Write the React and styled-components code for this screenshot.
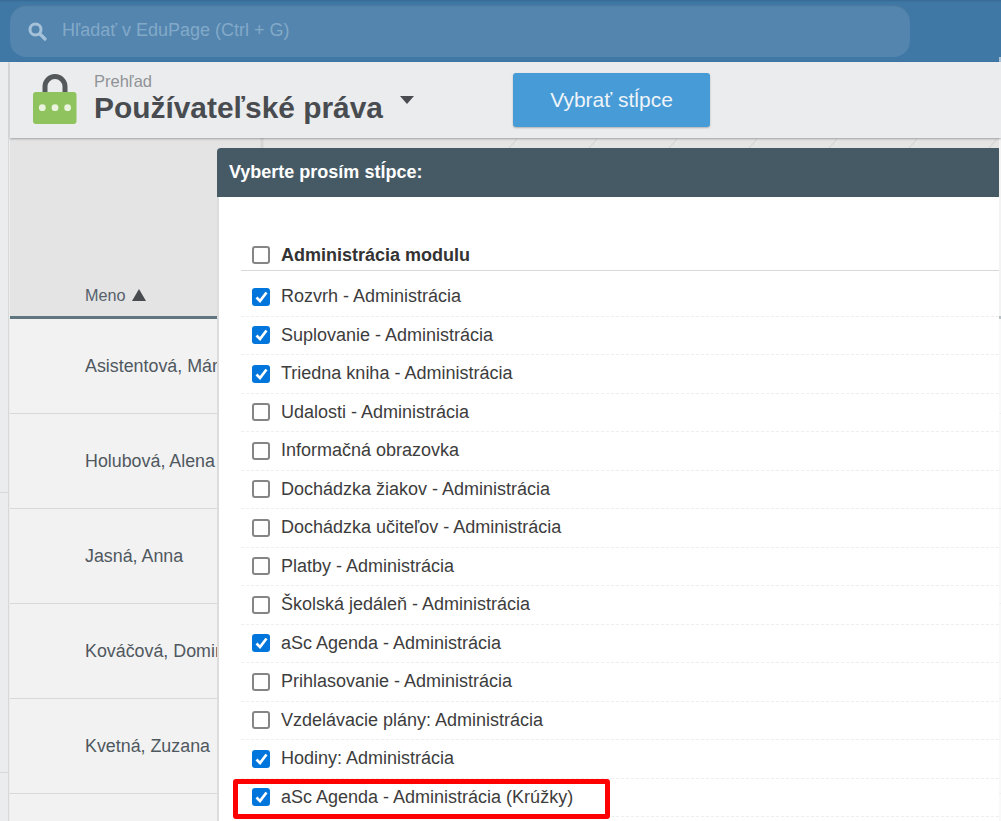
import styled, { createGlobalStyle } from "styled-components"

const GlobalStyle = createGlobalStyle`
  html, body {
    margin: 0;
    padding: 0;
    height: 821px;
    overflow: hidden;
    background: #ebecee;
    font-family: "Liberation Sans", Arial, sans-serif;
  }
`

const Page = styled.div`
  position: relative;
  width: 1001px;
  height: 821px;
  overflow: hidden;
`

const TopBar = styled.div`
  height: 62px;
  box-sizing: border-box;
  padding: 5px 91px 5px 10px;
  background: #3f77a5;
  box-shadow: inset 0 3px 2px -2px rgba(0, 0, 0, 0.12);
`

const SearchBox = styled.div`
  height: 52px;
  box-sizing: border-box;
  display: flex;
  align-items: center;
  gap: 15px;
  padding-left: 18px;
  border-radius: 16px;
  background: #5385af;
  color: #83a9c8;
  font-size: 18px;
  box-shadow: inset 0 1px 1px rgba(0, 0, 0, 0.1);
`

const SearchLabel = styled.span`
  margin-bottom: 2px;
`

const Main = styled.div`
  display: flex;
  height: 759px;
`

const LeftStrip = styled.div`
  flex: 0 0 8px;
  border-right: 1px solid #d8d8d8;
  background: #ebecee;
`

const StripSection = styled.div`
  height: ${(p) => p.$height}px;
  box-sizing: border-box;
  border-bottom: 1px solid #d8d8d8;
`

const Content = styled.div`
  flex: 1;
  margin-left: 1px;
  min-width: 0;
  display: flex;
  flex-direction: column;
`

const Header = styled.div`
  position: relative;
  z-index: 1;
  height: 76px;
  flex: none;
  box-sizing: border-box;
  display: flex;
  align-items: center;
  padding-left: 23px;
  background: #ebecee;
  box-shadow: 0 1px 2px rgba(0, 0, 0, 0.3);
`

const TitleBlock = styled.div`
  margin-left: 16px;
  width: 419px;
`

const Overline = styled.div`
  font-size: 16.5px;
  line-height: 18px;
  margin-top: -3px;
  color: #909396;
`

const TitleRow = styled.div`
  display: flex;
  align-items: flex-start;
  gap: 17px;
`

const Title = styled.div`
  font-size: 29.9px;
  line-height: 36px;
  font-weight: bold;
  color: #484c50;
`

const Caret = styled.span`
  width: 0;
  height: 0;
  margin-top: 6px;
  border-left: 7.5px solid transparent;
  border-right: 7.5px solid transparent;
  border-top: 8px solid #484c50;
`

const PrimaryButton = styled.div`
  width: 197px;
  height: 54px;
  display: flex;
  align-items: center;
  justify-content: center;
  border-radius: 3px;
  background: #479bd6;
  color: #eef4f9;
  font-size: 21px;
  box-shadow: 0 1px 2px rgba(0, 0, 0, 0.25);
`

const Table = styled.div`
  flex: 1;
  background: #f2f2f2;
`

const TableHead = styled.div`
  position: relative;
  height: 181px;
  box-sizing: border-box;
  display: flex;
  align-items: flex-end;
  padding: 0 0 12px 75px;
  border-bottom: 3px solid #5f7580;
  background: #e4e4e4;
  color: #56616b;
  font-size: 16.2px;
  line-height: 18px;
`

const HeadTicks = styled.svg`
  position: absolute;
  left: 0;
  top: 0;
`

const SortArrow = styled.span`
  width: 0;
  height: 0;
  margin: 0 0 3px 6px;
  border-left: 7px solid transparent;
  border-right: 7px solid transparent;
  border-bottom: 12px solid #484c50;
`

const TableRow = styled.div`
  height: 95px;
  box-sizing: border-box;
  display: flex;
  align-items: center;
  padding-left: 75px;
  border-bottom: 1px solid #d9d9d9;
  color: #50585f;
  font-size: 17.85px;
  white-space: nowrap;
`

const Dialog = styled.div`
  position: absolute;
  left: 217px;
  top: 148px;
  width: 782px;
  height: 673px;
  background: #fff;
  border-left: 2px solid #dcdcdc;
  box-sizing: border-box;
`

const DialogHeader = styled.div`
  height: 49px;
  margin-left: -2px;
  display: flex;
  align-items: center;
  padding-left: 12px;
  border-radius: 4px 0 0 0;
  background: #465a66;
  color: #fff;
  font-size: 18px;
  font-weight: bold;
`

const DialogBody = styled.div`
  padding: 38px 0 0 22px;
`

const SectionHead = styled.label`
  height: 36px;
  margin-bottom: 7px;
  box-sizing: border-box;
  display: flex;
  align-items: center;
  gap: 11px;
  padding: 5px 0 0 11px;
  border-bottom: 1px solid #d9d9d9;
  color: #333;
  font-size: 18px;
  font-weight: bold;
`

const OptionRow = styled.label`
  height: 38.5px;
  box-sizing: border-box;
  display: flex;
  align-items: center;
  gap: 11px;
  padding-left: 11px;
  border-bottom: 1px dashed #eee;
  color: #3d3d3d;
  font-size: 18px;
`

const CheckBox = styled.span`
  width: 18px;
  height: 18px;
  flex: none;
  box-sizing: border-box;
  display: flex;
  align-items: center;
  justify-content: center;
  border-radius: 3px;
  border: ${(p) => (p.$checked ? "none" : "2px solid #858585")};
  background: ${(p) => (p.$checked ? "#0075db" : "#fff")};
`

const RightEdge = styled.div`
  position: absolute;
  right: 0;
  top: 57px;
  bottom: 0;
  width: 2px;
  background: rgba(255, 255, 255, 0.55);
`

const Highlight = styled.div`
  position: absolute;
  left: 233px;
  top: 779px;
  width: 377px;
  height: 40px;
  box-sizing: border-box;
  border: 5px solid #f00;
  border-radius: 3px;
`

const rows = ["Asistentová, Mária", "Holubová, Alena", "Jasná, Anna", "Kováčová, Dominika", "Kvetná, Zuzana"]

const options = [
  ["Rozvrh - Administrácia", true],
  ["Suplovanie - Administrácia", true],
  ["Triedna kniha - Administrácia", true],
  ["Udalosti - Administrácia", false],
  ["Informačná obrazovka", false],
  ["Dochádzka žiakov - Administrácia", false],
  ["Dochádzka učiteľov - Administrácia", false],
  ["Platby - Administrácia", false],
  ["Školská jedáleň - Administrácia", false],
  ["aSc Agenda - Administrácia", true],
  ["Prihlasovanie - Administrácia", false],
  ["Vzdelávacie plány: Administrácia", false],
  ["Hodiny: Administrácia", true],
  ["aSc Agenda - Administrácia (Krúžky)", true],
]

const tickColumns = [507, 587, 667, 747, 827, 907, 987]

const Check = ({ checked }) => (
  <CheckBox $checked={checked}>
    {checked && (
      <svg width="13" height="12" viewBox="0 0 13 12">
        <path d="M1.5 6.5 L5 10 L11.5 1.5" fill="none" stroke="#fff" strokeWidth="2.7" />
      </svg>
    )}
  </CheckBox>
)

const SearchIcon = () => (
  <svg width="19" height="19" viewBox="0 0 19 19">
    <circle cx="7.5" cy="7.5" r="5.5" fill="none" stroke="#a6c2d9" strokeWidth="3" />
    <path d="M12 12 L17 17" stroke="#a6c2d9" strokeWidth="3.2" strokeLinecap="round" />
  </svg>
)

const LockIcon = () => (
  <svg width="45" height="52" viewBox="0 0 45 52">
    <path d="M12 22 V12.5 a10 10 0 0 1 20 0 V22" fill="none" stroke="#55585a" strokeWidth="5" />
    <rect x="0" y="18" width="43.5" height="32" rx="3" fill="#8fc35d" />
    <circle cx="9.3" cy="33.7" r="3.4" fill="#e9f3dd" />
    <circle cx="22" cy="33.7" r="3.4" fill="#e9f3dd" />
    <circle cx="34.6" cy="33.7" r="3.4" fill="#e9f3dd" />
  </svg>
)

const App = () => {
  return (
    <Page>
      <GlobalStyle />
      <TopBar>
        <SearchBox>
          <SearchIcon />
          <SearchLabel>Hľadať v EduPage (Ctrl + G)</SearchLabel>
        </SearchBox>
      </TopBar>
      <Main>
        <LeftStrip>
          <StripSection $height={431} />
          <StripSection $height={280} />
        </LeftStrip>
        <Content>
          <Header>
            <LockIcon />
            <TitleBlock>
              <Overline>Prehľad</Overline>
              <TitleRow>
                <Title>Používateľské práva</Title>
                <Caret />
              </TitleRow>
            </TitleBlock>
            <PrimaryButton>Vybrať stĺpce</PrimaryButton>
          </Header>
          <Table>
            <TableHead>
              <HeadTicks width="991" height="12">
                <path d="M252 0 V12" stroke="#d6d6d6" strokeWidth="3" />
                {tickColumns.map((x) => (
                  <path key={x} d={`M${x} 1 l-8 9`} stroke="#cfcfcf" />
                ))}
              </HeadTicks>
              Meno
              <SortArrow />
            </TableHead>
            {rows.map((name) => (
              <TableRow key={name}>{name}</TableRow>
            ))}
          </Table>
        </Content>
      </Main>
      <Dialog>
        <DialogHeader>Vyberte prosím stĺpce:</DialogHeader>
        <DialogBody>
          <SectionHead>
            <Check checked={false} />
            Administrácia modulu
          </SectionHead>
          {options.map(([label, checked]) => (
            <OptionRow key={label}>
              <Check checked={checked} />
              {label}
            </OptionRow>
          ))}
        </DialogBody>
      </Dialog>
      <RightEdge />
      <Highlight />
    </Page>
  )
}

export default App
